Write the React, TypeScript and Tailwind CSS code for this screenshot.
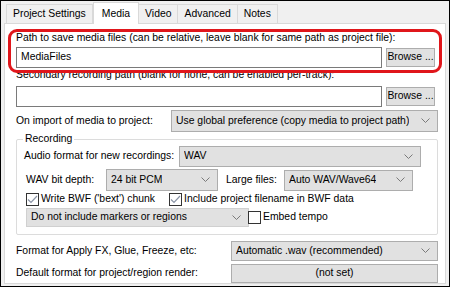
import React from 'react'

const font = { fontFamily: '"Liberation Sans", Arial, sans-serif' }

function Chevron() {
  return (
    <svg width="9" height="6" viewBox="0 0 9 6" className="shrink-0">
      <polyline points="0.5,0.5 4.5,4.5 8.5,0.5" fill="none" stroke="#7a7a7a" strokeWidth="1" />
    </svg>
  )
}

function Select({ text, className }: { text: string; className: string }) {
  return (
    <div className={`flex items-center justify-between bg-[#e1e1e1] border border-[#adadad] pl-[4px] pr-[7px] ${className}`}>
      <span className="whitespace-nowrap overflow-hidden">{text}</span>
      <Chevron />
    </div>
  )
}

function Check({ checked }: { checked: boolean }) {
  return (
    <div className="w-[13px] h-[13px] border border-[#333] bg-white flex items-center justify-center shrink-0">
      {checked && (
        <svg width="11" height="9" viewBox="0 0 11 9">
          <polyline points="1,4.5 4,7.5 10,1" fill="none" stroke="#8a94a6" strokeWidth="1.2" />
        </svg>
      )}
    </div>
  )
}

function Browse() {
  return (
    <div className="w-[49px] h-[19px] bg-[#e1e1e1] border border-[#adadad] flex items-center justify-center shrink-0 whitespace-nowrap">
      Browse ...
    </div>
  )
}

export default function App() {
  const tabs = ['Project Settings', 'Media', 'Video', 'Advanced', 'Notes']
  return (
    <div
      className="relative w-[450px] h-[287px] bg-[#f0f0f0] border border-black text-[10.4px] text-black leading-none overflow-hidden whitespace-nowrap"
      style={font}
    >
      {/* Tabs */}
      <div className="flex items-end pl-[6px] h-[22px]">
        {tabs.map((t) =>
          t === 'Media' ? (
            <div key={t} className="h-[22px] px-[8px] bg-white border border-[#d9d9d9] border-b-0 pt-[6px] -mb-px relative z-10">
              {t}
            </div>
          ) : (
            <div key={t} className="h-[19px] px-[6px] bg-[#f0f0f0] border border-[#d9d9d9] border-b-0 -ml-px pt-[4px]">
              {t}
            </div>
          )
        )}
      </div>

      {/* Panel */}
      <div className="mx-[3px] h-[261px] bg-white border border-[#d9d9d9] pl-[11px] pr-[6px] pt-[9px] flex flex-col">
        <div className="h-[12px]">Path to save media files (can be relative, leave blank for same path as project file):</div>
        <div className="flex items-center gap-[4px] mt-[2px]">
          <div className="w-[366px] h-[21px] border border-[#7a7a7a] flex items-center pl-[4px]">MediaFiles</div>
          <Browse />
        </div>

        <div className="h-[12px] mt-[2px]">Secondary recording path (blank for none, can be enabled per-track):</div>
        <div className="flex items-center gap-[4px] mt-[4px]">
          <div className="w-[366px] h-[21px] border border-[#7a7a7a]" />
          <Browse />
        </div>

        <div className="flex items-center justify-between mt-[3px] pr-[1px]">
          <span>On import of media to project:</span>
          <Select text="Use global preference (copy media to project path)" className="w-[267px] h-[22px]" />
        </div>

        {/* Recording group */}
        <div className="relative mt-[7px] h-[96px] border border-[#dcdcdc] rounded-[2px] mr-[1px] pl-[7px] pt-[6px]">
          <span className="absolute -top-[6px] left-[6px] bg-white px-[2px]">Recording</span>
          <div className="flex items-center">
            <span className="w-[155px]">Audio format for new recordings:</span>
            <Select text="WAV" className="w-[242px] h-[21px]" />
          </div>
          <div className="flex items-center mt-[2px] pl-[2px]">
            <span className="w-[80px]">WAV bit depth:</span>
            <Select text="24 bit PCM" className="w-[112px] h-[22px]" />
            <span className="ml-[8px] w-[58px]">Large files:</span>
            <Select text="Auto WAV/Wave64" className="w-[129px] h-[21px]" />
          </div>
          <div className="flex items-center mt-[2px] pl-[2px]">
            <Check checked />
            <span className="ml-[2px] w-[128px]">Write BWF (&apos;bext&apos;) chunk</span>
            <Check checked />
            <span className="ml-[2px]">Include project filename in BWF data</span>
          </div>
          <div className="flex items-center mt-[2px] pl-[2px]">
            <Select text="Do not include markers or regions" className="w-[223px] h-[19px] border-[#d0d0d0]" />
            <div className="ml-[-1px]"><Check checked={false} /></div>
            <span className="ml-[2px]">Embed tempo</span>
          </div>
        </div>

        <div className="flex items-center justify-between mt-[6px] pr-[1px]">
          <span>Format for Apply FX, Glue, Freeze, etc:</span>
          <Select text="Automatic .wav (recommended)" className="w-[207px] h-[20px]" />
        </div>
        <div className="flex items-center justify-between mt-[3px] pr-[1px]">
          <span>Default format for project/region render:</span>
          <div className="w-[207px] h-[19px] bg-[#e1e1e1] border border-[#adadad] flex items-center justify-center">(not set)</div>
        </div>
      </div>

      {/* Red annotation */}
      <div className="absolute left-[7px] top-[28px] w-[434px] h-[44px] border-[3px] border-[#e0161b] rounded-[9px] pointer-events-none" />
    </div>
  )
}
